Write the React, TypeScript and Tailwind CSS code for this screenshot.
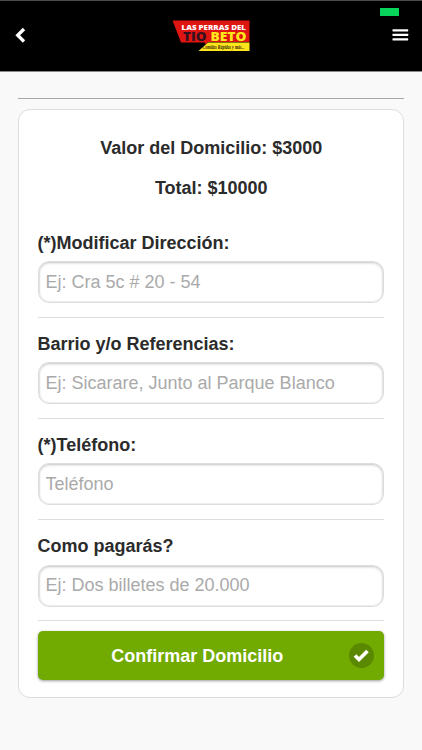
const fields = [
  { id: 'direccion', label: '(*)Modificar Dirección:', placeholder: 'Ej: Cra 5c # 20 - 54', type: 'text' },
  { id: 'barrio', label: 'Barrio y/o Referencias:', placeholder: 'Ej: Sicarare, Junto al Parque Blanco', type: 'text' },
  { id: 'telefono', label: '(*)Teléfono:', placeholder: 'Teléfono', type: 'tel' },
  { id: 'pago', label: 'Como pagarás?', placeholder: 'Ej: Dos billetes de 20.000', type: 'text' },
];

function Logo() {
  return (
    <svg className="mt-[18px] h-[34px] w-[78px]" viewBox="0 0 78 34" role="img" aria-label="Las Perras del Tio Beto">
      <path d="M.5 1.500H77.500V23H36L33.500 25.500L32.500 23.500H9Z" fill="#df1512" />
      <path d="M36 23.500H77.500V32H26.500Z" fill="#ffe51c" />
      <g fontFamily="'Open Sans', 'Liberation Sans', sans-serif" fontWeight="800">
        <text x="9.500" y="10.700" fontSize="7.600" fill="#fff" textLength="64.500" lengthAdjust="spacingAndGlyphs">LAS PERRAS DEL</text>
        <text x="11" y="21.700" fontSize="12.300" fill="#35101f" textLength="23.500" lengthAdjust="spacingAndGlyphs">TIO</text>
        <text x="38.500" y="21.700" fontSize="12.300" fill="#ffe51c" textLength="36" lengthAdjust="spacingAndGlyphs">BETO</text>
      </g>
      <text x="30.500" y="29.800" fontFamily="'Liberation Serif', serif" fontStyle="italic" fontWeight="700" fontSize="5.800" fill="#2d1a0a" textLength="42" lengthAdjust="spacingAndGlyphs">Comidas Rápidas y más...</text>
    </svg>
  );
}

export default function App() {
  return (
    <div className="min-h-[750px] w-full bg-[#f9f9f9] font-['Liberation_Sans',Arial,sans-serif] text-[18px] text-[#2b2b2b]">
      <header className="relative flex h-[72px] items-start justify-between border-t border-b border-t-[#4c4c4c] border-b-[#8a8a8a] bg-black">
        <button aria-label="Volver" className="mt-[26px] ml-[14px] w-[78px]">
          <svg width="12" height="17" viewBox="0 0 12 17" fill="none">
            <path d="M10 2L3.700 8.300L10 14.500" stroke="#fff" strokeWidth="3.300" />
          </svg>
        </button>
        <Logo />
        <button aria-label="Menú" className="mt-[28px] mr-[13px] flex w-[79px] justify-end">
          <svg width="17" height="13" viewBox="0 0 17 13" fill="#fff">
            <rect x=".5" y=".3" width="15.700" height="2.200" rx=".4" />
            <rect x=".5" y="4.800" width="15.700" height="2.200" rx=".4" />
            <rect x=".5" y="9.300" width="15.700" height="2.200" rx=".4" />
          </svg>
        </button>
        <span className="absolute top-[7px] right-[23px] h-[8px] w-[19px] bg-[#08d35b]" />
      </header>

      <main className="px-[18px] pt-[26px]">
        <hr className="border-t-[1.500px] border-[#a6a6a6]" />
        <form className="mt-[10px] h-[589px] rounded-[12px] border border-[#dddddd] bg-white pr-[19px] pl-[18.500px]">
          <div className="pt-[27px] text-center font-bold">
            <h3 className="h-[40px] pl-px leading-[22px]">Valor del Domicilio: $3000</h3>
            <h3 className="h-[39.500px] pl-px leading-[22px]">Total: $10000</h3>
          </div>
          {fields.map((field) => (
            <div key={field.id} className="h-[101.200px] border-b border-[#dedede] pt-[15px]">
              <label htmlFor={field.id} className="block h-[29.500px] leading-[22px] font-bold">{field.label}</label>
              <input
                id={field.id}
                type={field.type}
                placeholder={field.placeholder}
                className="block h-[42px] w-full rounded-[11px] border border-[#dddddd] bg-white px-[7px] shadow-[inset_0_1px_3px_rgba(0,0,0,0.2),inset_0_0_0_1px_rgba(0,0,0,0.04)] outline-none placeholder:text-[#aaaaaa] placeholder:opacity-100"
              />
            </div>
          ))}
          <button type="button" className="mt-[10px] flex h-[49px] w-full items-center rounded-[5px] bg-[#71aa00] pr-[10px] pl-[8px] font-bold text-white shadow-[0_1px_3px_rgba(0,0,0,0.4)]">
            <span className="flex-1 pt-px text-center">Confirmar Domicilio</span>
            <span className="flex h-[25px] w-[25px] items-center justify-center rounded-full bg-[#5a8800]">
              <svg width="17" height="15" viewBox="0 0 17 15" fill="none">
                <path d="M2 7.500L6 11.500L14.500 3" stroke="#fff" strokeWidth="3.700" />
              </svg>
            </span>
          </button>
        </form>
      </main>
    </div>
  );
}
